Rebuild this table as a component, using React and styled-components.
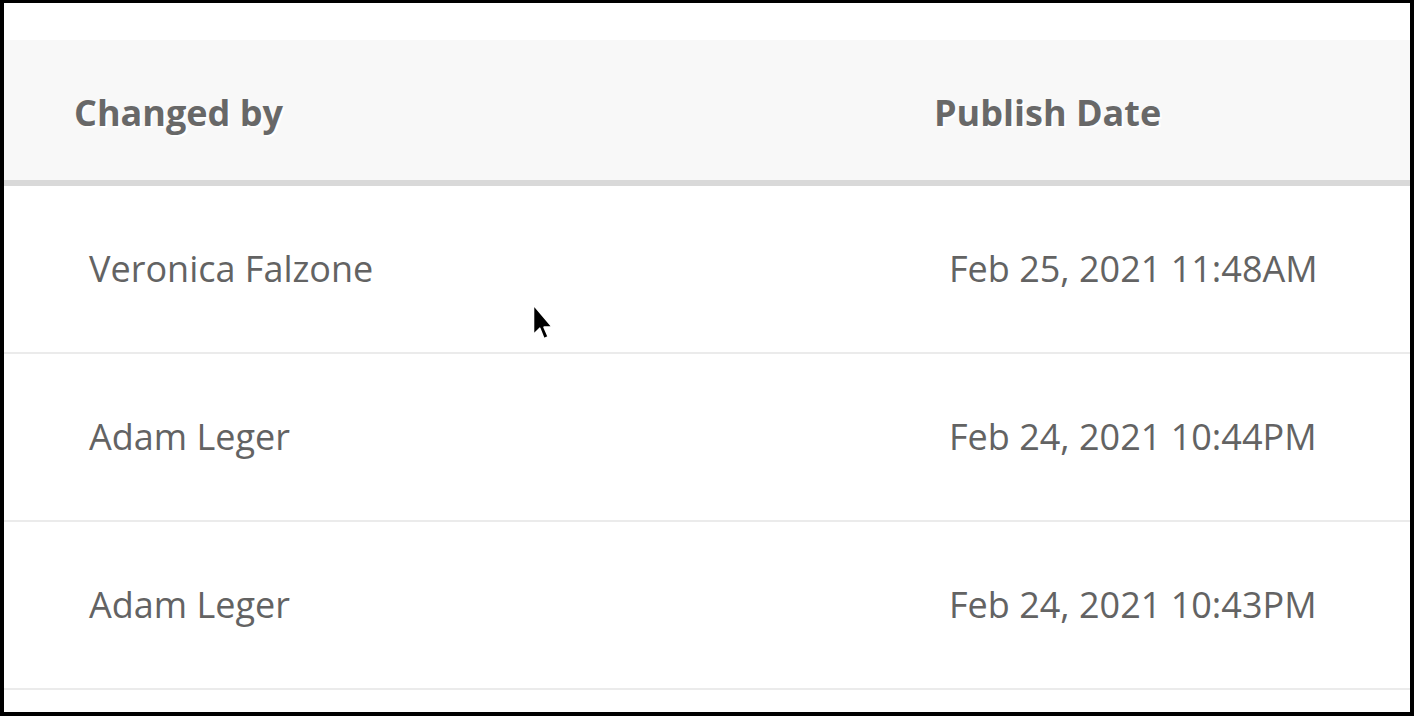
import React from "react";
import styled, { createGlobalStyle } from "styled-components";

const Global = createGlobalStyle`
  html, body { margin: 0; padding: 0; background: #000; }
  body { font-family: "Open Sans", "Liberation Sans", sans-serif; }
`;

const Frame = styled.div`
  position: relative;
  box-sizing: border-box;
  width: 1414px;
  height: 716px;
  border-style: solid;
  border-color: #000;
  border-width: 3px 4px 4px 4px;
  background: #fff;
  padding-top: 37px;
  overflow: hidden;
`;

const Table = styled.div`
  display: flex;
  flex-direction: column;
`;

const HeaderRow = styled.div`
  display: grid;
  grid-template-columns: 860px 1fr;
  height: 140px;
  align-items: center;
  background: #f8f8f8;
  border-bottom: 6px solid #d9d9d9;
`;

const HeaderCell = styled.div`
  padding-left: 70px;
  padding-top: 4px;
  font-weight: 700;
  font-size: 36px;
  color: #686868;
  text-shadow: 1px 1px 0 #fff, 2px 2px 0 #fff;
`;

const Row = styled.div`
  display: grid;
  grid-template-columns: 860px 1fr;
  height: 166px;
  align-items: center;
  border-bottom: 2px solid #ebebeb;
`;

const Cell = styled.div`
  padding-left: 85px;
  padding-bottom: 2px;
  font-size: 36px;
  color: #636363;
`;

const Cursor = styled.svg`
  position: absolute;
  left: 527px;
  top: 300px;
`;

const rows = [
  ["Veronica Falzone", "Feb 25, 2021 11:48AM"],
  ["Adam Leger", "Feb 24, 2021 10:44PM"],
  ["Adam Leger", "Feb 24, 2021 10:43PM"],
];

export default function App() {
  return (
    <>
      <Global />
      <Frame>
        <Table>
          <HeaderRow>
            <HeaderCell>Changed by</HeaderCell>
            <HeaderCell>Publish Date</HeaderCell>
          </HeaderRow>
          {rows.map(([who, when], i) => (
            <Row key={i}>
              <Cell>{who}</Cell>
              <Cell>{when}</Cell>
            </Row>
          ))}
        </Table>
        <Cursor width="26" height="42" viewBox="0 0 24 40">
          <path
            d="M2 2 L2 30 L8 24 L12 34 L16 32 L12 23 L20 23 Z"
            fill="#000"
            stroke="#fff"
            strokeWidth="1.5"
            strokeLinejoin="round"
          />
        </Cursor>
      </Frame>
    </>
  );
}
